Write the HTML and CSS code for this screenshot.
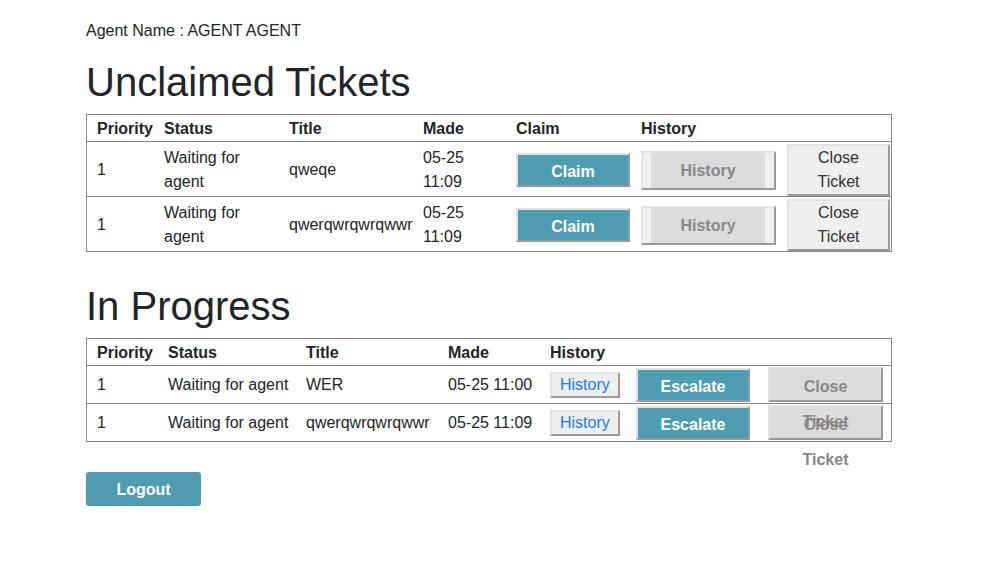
FILE: index.html
```html
<!DOCTYPE html>
<html lang="en">
<head>
<meta charset="utf-8">
<title>Agent Tickets</title>
<link rel="stylesheet" href="styles.css">
</head>
<body>
<div class="page">
  <p class="agent">Agent Name : AGENT AGENT</p>

  <h1 class="title">Unclaimed Tickets</h1>
  <table class="tickets">
    <thead>
      <tr>
        <th class="u-pri">Priority</th>
        <th class="u-status">Status</th>
        <th class="u-title">Title</th>
        <th class="u-made">Made</th>
        <th class="u-claim">Claim</th>
        <th class="u-hist">History</th>
        <th class="u-close"></th>
      </tr>
    </thead>
    <tbody>
      <tr>
        <td>1</td>
        <td>Waiting for agent</td>
        <td>qweqe</td>
        <td>05-25 11:09</td>
        <td><button class="btn btn-teal btn-claim">Claim</button></td>
        <td><button class="btn btn-hist"><span class="btn-hist-inner">History</span></button></td>
        <td><button class="btn btn-close-wrap">Close Ticket</button></td>
      </tr>
      <tr>
        <td>1</td>
        <td>Waiting for agent</td>
        <td>qwerqwrqwrqwwr</td>
        <td>05-25 11:09</td>
        <td><button class="btn btn-teal btn-claim">Claim</button></td>
        <td><button class="btn btn-hist"><span class="btn-hist-inner">History</span></button></td>
        <td><button class="btn btn-close-wrap">Close Ticket</button></td>
      </tr>
    </tbody>
  </table>

  <h1 class="title">In Progress</h1>
  <table class="tickets tickets-progress">
    <thead>
      <tr>
        <th class="p-pri">Priority</th>
        <th class="p-status">Status</th>
        <th class="p-title">Title</th>
        <th class="p-made">Made</th>
        <th class="p-hist">History</th>
        <th class="p-esc"></th>
        <th class="p-close"></th>
      </tr>
    </thead>
    <tbody>
      <tr>
        <td>1</td>
        <td>Waiting for agent</td>
        <td>WER</td>
        <td>05-25 11:00</td>
        <td><button class="btn btn-default">History</button></td>
        <td><button class="btn btn-teal btn-esc">Escalate</button></td>
        <td><a class="btn-close-grey">Close Ticket</a></td>
      </tr>
      <tr>
        <td>1</td>
        <td>Waiting for agent</td>
        <td>qwerqwrqwrqwwr</td>
        <td>05-25 11:09</td>
        <td><button class="btn btn-default">History</button></td>
        <td><button class="btn btn-teal btn-esc">Escalate</button></td>
        <td><a class="btn-close-grey">Close Ticket</a></td>
      </tr>
    </tbody>
  </table>

  <button class="logout">Logout</button>
</div>
</body>
</html>
```

FILE: styles.css
```css
html, body {
  margin: 0;
  padding: 0;
  background: #fff;
}

body {
  font-family: "Liberation Sans", Arial, sans-serif;
  font-size: 16px;
  line-height: 24px;
  color: #212529;
}

.page {
  padding: 19px 0 0 86px;
  width: 806px;
}

.agent {
  margin: 0 0 15px;
}

.title {
  font-size: 40px;
  font-weight: 500;
  line-height: 48px;
  margin: 0 0 8px;
}

.tickets {
  width: 806px;
  table-layout: fixed;
  border-collapse: separate;
  border-spacing: 0;
  border: 1px solid #888;
  margin: 0 0 30px;
}

.tickets th,
.tickets td {
  box-sizing: border-box;
  padding: 2px 1px 0 10px;
  text-align: left;
  vertical-align: middle;
}

.tickets-progress td {
  padding: 1px 1px 1px 10px;
}

.tickets th {
  font-weight: bold;
}

.tickets td {
  border-top: 1px solid #888;
}

/* Unclaimed column widths */
.u-pri { width: 67px; }
.u-status { width: 125px; }
.u-title { width: 134px; }
.u-made { width: 93px; }
.u-claim { width: 125px; }
.u-hist { width: 146px; }
.u-close { width: 114px; }

/* In progress column widths */
.p-pri { width: 71px; }
.p-status { width: 138px; }
.p-title { width: 142px; }
.p-made { width: 102px; }
.p-hist { width: 86px; }
.p-esc { width: 132px; }
.p-close { width: 133px; }

.btn {
  display: block;
  box-sizing: border-box;
  margin: 0;
  font-family: "Liberation Sans", Arial, sans-serif;
  font-size: 16px;
  border-width: 2px;
  border-style: solid;
  border-color: #e2e2e2 #999 #999 #e2e2e2;
  border-radius: 0;
  cursor: pointer;
}

.btn-teal {
  background: #4d9cb0;
  color: #fff;
  font-weight: bold;
  height: 34px;
  line-height: 27px;
  padding: 3px 0 0;
}

.btn-claim {
  width: 100%;
}

.btn-esc {
  width: 114px;
}

.btn-hist {
  width: 100%;
  height: 39px;
  padding: 0 9px 0 8px;
  background: #efefef;
}

.btn-hist-inner {
  display: block;
  background: #dcdcdc;
  color: #888;
  font-weight: bold;
  line-height: 35px;
}

.btn-close-wrap {
  width: 100%;
  height: 52px;
  padding: 0 10px;
  background: #efefef;
  color: #333;
  line-height: 24px;
}

.btn-default {
  display: inline-block;
  background: #efefef;
  color: #1a7cf0;
  padding: 1px 8px;
  line-height: 18px;
  height: 26px;
}

.btn-close-grey {
  display: block;
  box-sizing: border-box;
  width: 115px;
  height: 35px;
  padding: 0 10px;
  border-width: 2px;
  border-style: solid;
  border-color: #e2e2e2 #999 #999 #e2e2e2;
  background: #dcdcdc;
  color: #888;
  font-weight: bold;
  line-height: 35px;
  text-align: center;
  cursor: pointer;
}

.logout {
  display: block;
  width: 115px;
  height: 34px;
  margin: 0;
  padding: 2px 0 0;
  border: none;
  border-radius: 3px;
  background: #4d9cb0;
  color: #fff;
  font-family: "Liberation Sans", Arial, sans-serif;
  font-size: 16px;
  font-weight: bold;
  cursor: pointer;
}
```
